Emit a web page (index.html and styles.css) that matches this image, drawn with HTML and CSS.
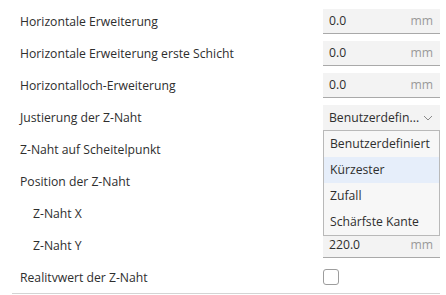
FILE: index.html
```html
<!DOCTYPE html>
<html lang="de">
<head>
    <meta charset="UTF-8">
    <title>Einstellungen</title>
    <link rel="stylesheet" href="styles.css">
</head>
<body>
    <div class="settings">
        <div class="row">
            <span class="label">Horizontale Erweiterung</span>
            <div class="field"><span>0.0</span><span class="unit">mm</span></div>
        </div>
        <div class="row">
            <span class="label">Horizontale Erweiterung erste Schicht</span>
            <div class="field"><span>0.0</span><span class="unit">mm</span></div>
        </div>
        <div class="row">
            <span class="label">Horizontalloch-Erweiterung</span>
            <div class="field"><span>0.0</span><span class="unit">mm</span></div>
        </div>
        <div class="row">
            <span class="label">Justierung der Z-Naht</span>
            <div class="combo">
                <span>Benutzerdefin...</span>
                <svg class="chevron" width="10" height="6" viewBox="0 0 10 6">
                    <path d="M1 1 L5 5 L9 1" fill="none" stroke="#8a8a8a" stroke-width="1"/>
                </svg>
                <ul class="popup">
                    <li>Benutzerdefiniert</li>
                    <li class="hover">Kürzester</li>
                    <li>Zufall</li>
                    <li>Schärfste Kante</li>
                </ul>
            </div>
        </div>
        <div class="row">
            <span class="label">Z-Naht auf Scheitelpunkt</span>
        </div>
        <div class="row">
            <span class="label">Position der Z-Naht</span>
        </div>
        <div class="row child">
            <span class="label">Z-Naht X</span>
        </div>
        <div class="row child">
            <span class="label">Z-Naht Y</span>
            <div class="field"><span>220.0</span><span class="unit">mm</span></div>
        </div>
        <div class="row">
            <span class="label">Realitvwert der Z-Naht</span>
            <div class="check"></div>
        </div>
    </div>
</body>
</html>
```

FILE: styles.css
```css
body {
    margin: 0;
    background-color: #ffffff;
    font-family: 'Open Sans', 'Noto Sans', sans-serif;
    font-size: 12.2px;
    color: #2e2e2e;
}
.settings {
    padding-top: 5px;
    margin: 0 6px 0 12px;
    border-bottom: 1px solid #d4d4d4;
}
.row {
    height: 32px;
    display: grid;
    grid-template-columns: 1fr 117px;
    align-items: center;
    padding-left: 8px;
}
.row.child .label {
    padding-left: 13px;
}
.label {
    grid-column: 1;
    white-space: nowrap;
}
.field,
.combo {
    grid-column: 2;
    height: 25px;
    box-sizing: border-box;
    background-color: #f3f3f3;
    display: flex;
    align-items: center;
    justify-content: space-between;
    padding: 0 7px 0 6px;
}
.field {
    border-bottom: 1px solid #a9a9a9;
}
.unit {
    color: #9a9a9a;
}
.combo {
    position: relative;
    justify-content: flex-start;
    gap: 4px;
    padding-right: 8px;
    white-space: nowrap;
}
.chevron {
    margin-top: 1px;
    flex-shrink: 0;
}
.popup {
    position: absolute;
    top: 25px;
    left: 0;
    width: 117px;
    box-sizing: border-box;
    margin: 0;
    padding: 0;
    list-style: none;
    background-color: #f7f7f7;
    border: 1px solid #b9b9b9;
    z-index: 2;
}
.popup li {
    height: 26px;
    line-height: 26px;
    padding-left: 6px;
    white-space: nowrap;
}
.popup li.hover {
    background-color: #e6eefa;
}
.check {
    grid-column: 2;
    width: 16px;
    height: 16px;
    box-sizing: border-box;
    border: 1px solid #9d9d9d;
    border-radius: 3px;
    background-color: #ffffff;
}
```
